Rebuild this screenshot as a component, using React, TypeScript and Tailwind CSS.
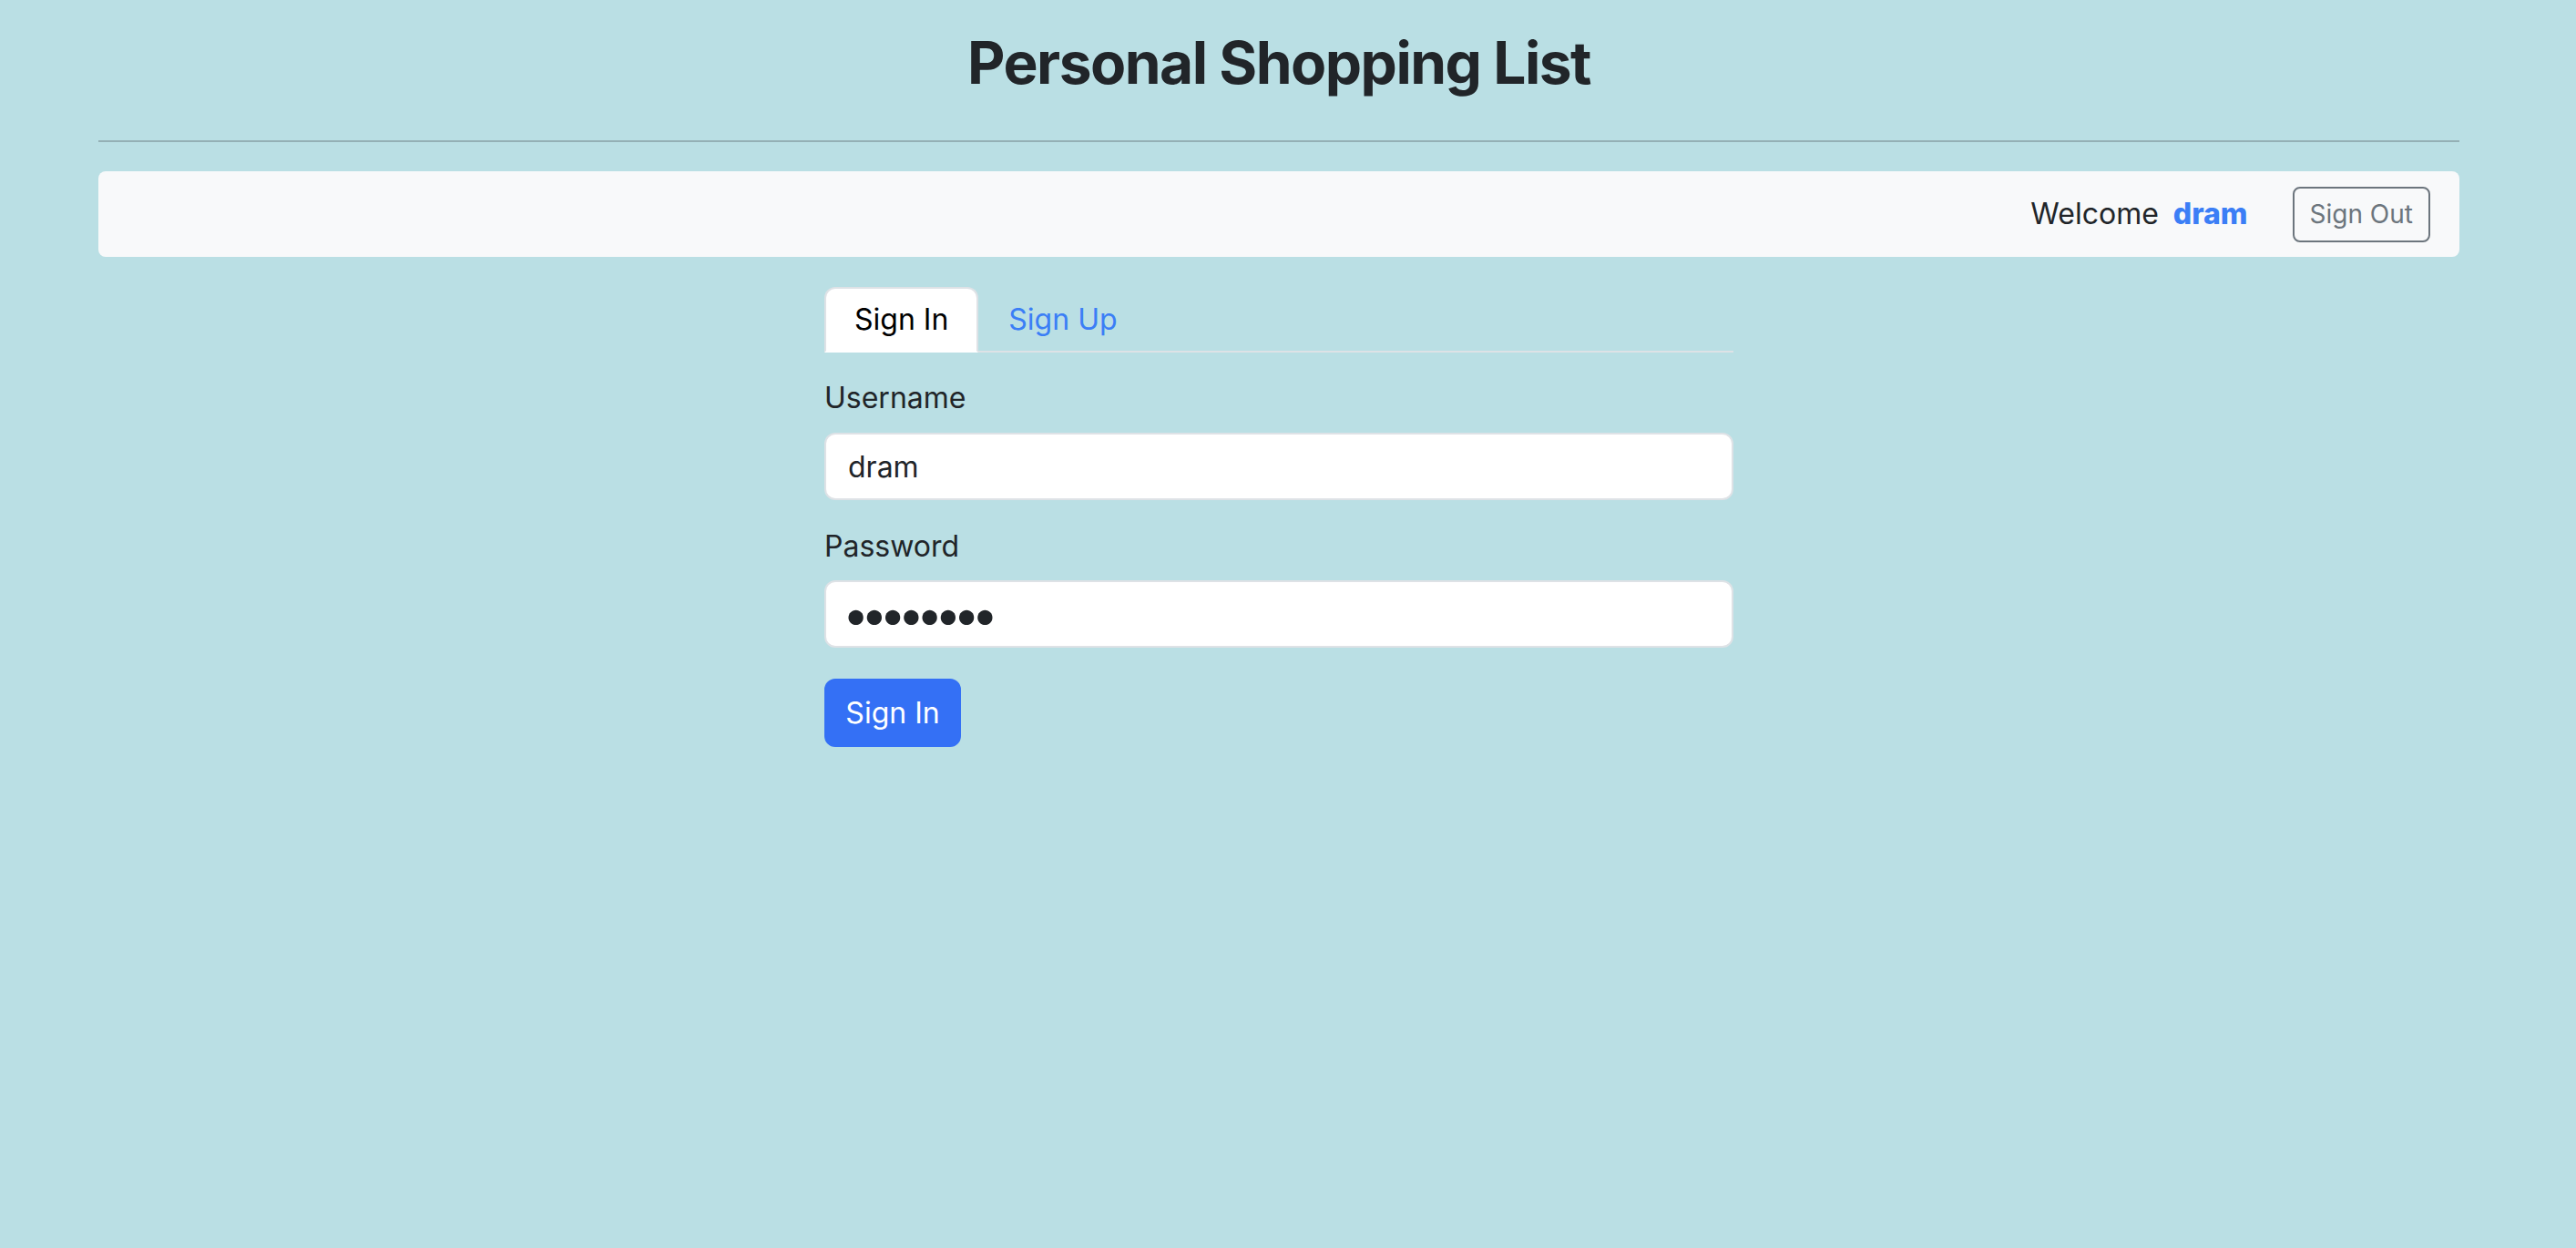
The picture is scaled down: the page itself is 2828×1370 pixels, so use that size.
import { useState } from "react";

export default function App() {
  const [tab, setTab] = useState<"in" | "up">("in");
  const [username, setUsername] = useState("dram");
  const [password, setPassword] = useState("dramdram");

  return (
    <div className="min-h-screen w-full bg-[#badfe4] text-[#212529] font-['Inter',sans-serif]">
      <div className="pl-[108px] pr-[128px]">
        <h2 className="pt-[30px] text-center text-[64px] leading-[77px] font-bold tracking-[-1.5px]">
          Personal Shopping List
        </h2>
        <hr className="mt-[47px] border-t-2 border-[#94b0b5]" />

        {/* top bar */}
        <nav className="mt-[32px] flex h-[94px] items-center justify-end rounded-[8px] bg-[#f8f9fa] px-[32px]">
          <span className="text-[32px]">Welcome</span>
          <span className="ml-[16px] text-[32px] font-extrabold text-[#3b7ef6]">dram</span>
          <button className="ml-[49px] h-[61px] rounded-[8px] border-2 border-[#6c757d] px-[17px] text-[28px] text-[#6c757d]">
            Sign Out
          </button>
        </nav>

        <div className="mx-auto mt-[33px] w-[998px]">
          <ul className="flex border-b-2 border-[#dee2e6] text-[32px]">
            <li className="-mb-[2px]">
              <button
                onClick={() => setTab("in")}
                className={
                  tab === "in"
                    ? "h-[72px] rounded-t-[12px] border-2 border-[#dee2e6] border-b-white bg-white px-[31px] text-black"
                    : "h-[72px] border-2 border-transparent px-[31px] text-[#3b7ef6]"
                }
              >
                Sign In
              </button>
            </li>
            <li className="-mb-[2px]">
              <button
                onClick={() => setTab("up")}
                className={
                  tab === "up"
                    ? "h-[72px] rounded-t-[12px] border-2 border-[#dee2e6] border-b-white bg-white px-[31px] text-black"
                    : "h-[72px] border-2 border-transparent px-[31px] text-[#3b7ef6]"
                }
              >
                Sign Up
              </button>
            </li>
          </ul>

          <form onSubmit={(e) => e.preventDefault()}>
            <label className="mt-[26px] mb-[14px] block text-[32px] leading-[48px]">Username</label>
            <input
              value={username}
              onChange={(e) => setUsername(e.target.value)}
              className="block h-[74px] w-full rounded-[12px] border-2 border-[#dee2e6] bg-white px-[24px] text-[32px] text-[#212529] outline-none"
            />

            <label className="mt-[27px] mb-[13px] block text-[32px] leading-[48px]">Password</label>
            <input
              type="password"
              value={password}
              onChange={(e) => setPassword(e.target.value)}
              className="block h-[74px] w-full rounded-[12px] border-2 border-[#dee2e6] bg-white pl-[18px] pr-[24px] text-[52px] leading-none tracking-[-9px] text-[#212529] outline-none"
            />

            <button
              type="submit"
              className="mt-[34px] h-[75px] w-[150px] rounded-[12px] border-2 border-[#3470f5] bg-[#3470f5] text-[32px] text-white"
            >
              Sign In
            </button>
          </form>
        </div>
      </div>
    </div>
  );
}
